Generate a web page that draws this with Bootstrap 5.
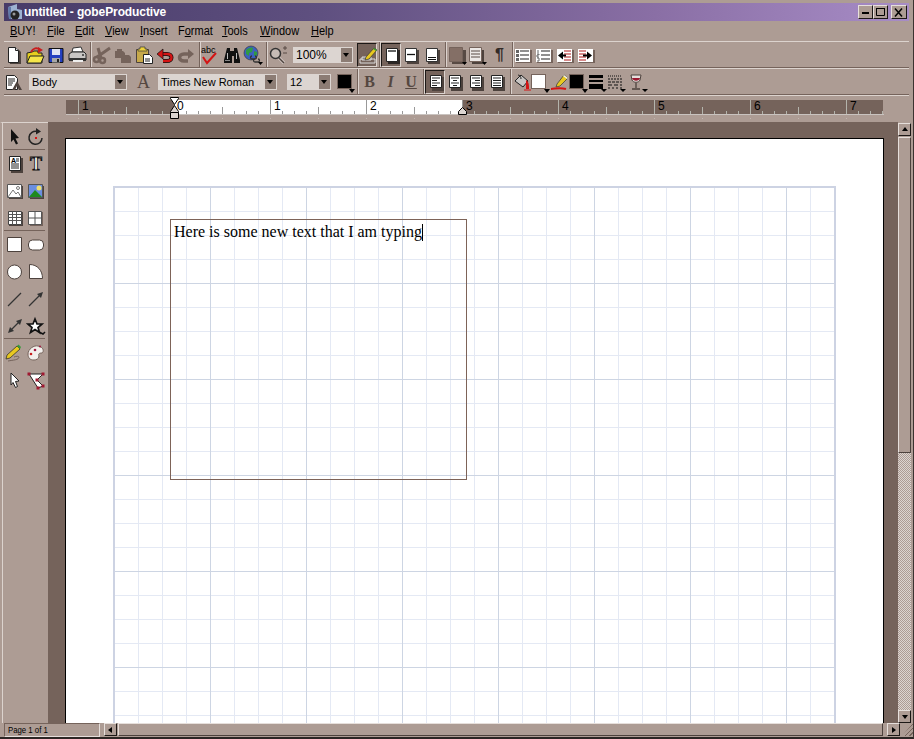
<!DOCTYPE html>
<html lang="en">
<head>
  <meta charset="UTF-8" />
  <meta name="viewport" content="width=device-width, initial-scale=1" />
  <title>untitled - gobeProductive</title>
  <link href="https://cdn.jsdelivr.net/npm/bootstrap@5.3.0/dist/css/bootstrap.min.css" rel="stylesheet" />
  <style>
    html, body { margin: 0; background: #ad9c94; overflow: hidden; }
    .app-win { width: 914px; height: 739px; background: #ad9c94; color: #000; font-family: "Liberation Sans", Arial, sans-serif; font-size: 12px; border-right: 1px solid #3b3330; border-bottom: 2px solid #2c2624; overflow: hidden; }
    .sprite { position: absolute; width: 0; height: 0; }

    .title-bar { height: 18px; margin: 3px 4px 0 4px; padding-left: 2px; background: linear-gradient(to right, #473b68 0%, #5f5080 35%, #8a6fa5 72%, #a78cc6 100%); color: #fff; font-weight: 700; font-size: 12px; letter-spacing: -.1px; }
    .win-btn { width: 15px; height: 14px; background: #ad9c94; border: 1px solid; border-color: #e6dfdb #1c1816 #1c1816 #e6dfdb; color: #000; }
    .win-close { width: 16px; margin: 0 2px 0 3px; }
    .menu-bar { height: 20px; margin-left: 4px; }
    .menu-bar .nav-link { padding: 0; color: #000; font-size: 12.5px; line-height: 20px; position: absolute; transform: scaleX(.88); transform-origin: left center; }
    .menu-wrap { position: relative; }
    .h-sep { height: 2px; margin: 0 4px 0 4px; background: linear-gradient(#75635b 50%, #dcd3ce 50%); }

    .tool-row { height: 25px; padding-left: 4px; }
    .tool-btn { width: 21px; height: 24px; padding: 0; border: 0; border-radius: 0; background: transparent; flex: none; }
    .tool-btn svg { width: 20px; height: 20px; display: block; }
    .tool-on { width: 20px; background: #75635b; border: 1px solid; border-color: #1c1816 #dcd3ce #dcd3ce #1c1816; }
    .v-sep { width: 2px; height: 25px; margin-left: 2px; flex: none; background: linear-gradient(to right, #75635b 50%, #dcd3ce 50%); }
    .w-19 { width: 19px; }
    .w-20 { width: 20px; }
    .combo-box { height: 16px; background: #dcd5d1; font-size: 11px; line-height: 16px; padding-left: 3px; position: relative; flex: none; }
    .combo-std { margin-left: 4px; }
    .combo-body { width: 98px; }
    .combo-font { width: 119px; }
    .combo-size { width: 44px; margin-left: 10px; }
    .combo-zoom { width: 60px; font-size: 12px; }
    .combo-arrow { position: absolute; right: 1px; top: 1px; width: 11px; height: 14px; background: #8c7c74; }
    .combo-arrow::after { content: ""; position: absolute; left: 2px; top: 5px; border: 3.500px solid transparent; border-top: 4px solid #000; border-bottom: 0; }
    .glyph-btn { font-family: "Liberation Serif", serif; font-size: 16px; font-weight: 700; color: #554740; line-height: 24px; text-align: center; }
    .glyph-a { margin-left: 6px; margin-right: 0; font-weight: 400; font-size: 18px; }
    .glyph-i { font-style: italic; }
    .glyph-p { font-family: "Liberation Sans", sans-serif; color: #332b28; font-size: 16px; }
    .swatch-box { height: 24px; position: relative; flex: none; width: 19px; }
    .swatch-box > span { position: absolute; left: 0; top: 4px; width: 15px; height: 15px; border: 1px solid #75635b; }
    .swatch-box::after { content: ""; position: absolute; right: 0; bottom: 1px; border: 3px solid transparent; border-top: 4px solid #000; border-bottom: 0; }
    .swatch-text { width: 18px; margin-left: 6px; }
    .swatch-white > span { background: #fff; }
    .swatch-black > span { background: #000; }

    .ruler-row { height: 26px; flex: none; }
    .ruler-row svg { display: block; }

    .side-tools { width: 48px; flex: none; border-top: 1px solid #dcd3ce; border-left: 2px solid transparent; padding-left: 2px; padding-top: 1px; box-shadow: inset 1px 0 0 #dcd3ce; }
    .side-row { height: 25px; margin-bottom: 2px; padding-left: 1px; }
    .side-row .tool-btn { height: 25px; }
    .side-sep { height: 1px; margin: -2px 3px 1px 0; background: #75635b; }

    .canvas-pane { width: 850px; flex: none; background: #75635b; padding: 16px 0 0 17px; overflow: hidden; }
    .paper { width: 819px; height: 600px; background: #fff; border: 1px solid #000; border-bottom: 0; padding: 47px 0 0 47px; }
    .grid-sheet { width: 723px; height: 560px; position: relative; border: 2px solid #cdd3e3; border-bottom: 0;
      background-image:
        linear-gradient(to right, #cdd5e3 1px, transparent 1px),
        linear-gradient(to bottom, #cdd5e3 1px, transparent 1px),
        linear-gradient(to right, #e4e9f4 1px, transparent 1px),
        linear-gradient(to bottom, #e4e9f4 1px, transparent 1px);
      background-size: 96px 96px, 96px 96px, 24px 24px, 24px 24px;
      background-position: 95px 0, 0 95px, 23px 0, 0 23px; }
    .text-frame { position: absolute; left: 55px; top: 31px; width: 297px; height: 261px; border: 1px solid #7d6358; padding: 3px 0 0 3px; font-family: "Liberation Serif", "Times New Roman", serif; font-size: 16px; line-height: 18px; white-space: nowrap; }
    .caret-bar { display: inline-block; width: 1px; height: 17px; background: #000; vertical-align: -4px; }

    .v-scroll { width: 13px; flex: none; margin-top: 1px; }
    .scroll-btn { width: 13px; height: 13px; background: #ad9c94; border: 1px solid; border-color: #e6dfdb #1c1816 #1c1816 #e6dfdb; position: relative; flex: none; }
    .tri-up::after, .tri-down::after, .tri-left::after, .tri-right::after { content: ""; position: absolute; border: 3px solid transparent; }
    .tri-up::after { left: 3px; top: 3px; border-bottom: 4px solid #000; border-top: 0; }
    .tri-down::after { left: 3px; top: 4px; border-top: 4px solid #000; border-bottom: 0; }
    .tri-left::after { left: 3px; top: 3px; border-right: 4px solid #000; border-left: 0; }
    .tri-right::after { left: 4px; top: 3px; border-left: 4px solid #000; border-right: 0; }
    .v-thumb { height: 316px; margin-top: 1px; flex: none; background: #ad9c94; border: 1px solid; border-color: #e6dfdb #4d423d #4d423d #e6dfdb; }
    .v-track { flex-grow: 1; background: repeating-conic-gradient(#ad9c94 0 25%, #dcd5d1 0 50%) 0 0 / 2px 2px; }

    .status-row { height: 14px; flex: none; }
    .page-box { width: 97px; height: 14px; margin-left: 4px; border: 1px solid; border-color: #75635b #e6dfdb #e6dfdb #75635b; font-size: 9.500px; line-height: 12px; padding-left: 3px; }
    .page-text { display: inline-block; transform: scaleX(.82); transform-origin: left center; }
    .h-thumb { width: 772px; height: 13px; margin-left: 1px; border: 1px solid; border-color: #e6dfdb #4d423d #4d423d #e6dfdb; }
    .grip-box { width: 11px; height: 13px; margin-left: 2px; background: repeating-linear-gradient(135deg, #ad9c94 0 2px, #75635b 2px 3px); clip-path: polygon(100% 0, 100% 100%, 0 100%); }
  </style>
</head>
<body>
  <svg class="sprite" aria-hidden="true">
    <symbol id="i-new" viewBox="0 0 20 20"><path d="M6 4h8l3 3v12H6z" fill="#4d423d"/><path d="M4.500 2.500h7l3 3v12h-10z" fill="#fff" stroke="#222"/><path d="M11.500 2.500v3h3" fill="#ddd" stroke="#222"/></symbol>
    <symbol id="i-open" viewBox="0 0 20 20"><path d="M2 8l5-1 2-1h4v2l4 0 0 10H2z" fill="#e6cf1e" stroke="#222"/><path d="M2 18l3-7h14l-3 7z" fill="#f5e64a" stroke="#222"/><path d="M6 7c2-4 6-5 9-2" fill="none" stroke="#c81e1e" stroke-width="2"/><path d="M13 2l5 3-5 3z" fill="#c81e1e"/></symbol>
    <symbol id="i-save" viewBox="0 0 20 20"><path d="M3 3.500h14v14H3z" fill="#2440c0" stroke="#111"/><path d="M6 4h8v6H6z" fill="#dfe3f3"/><path d="M6 13h8v4.500H6z" fill="#a8a8a8"/><path d="M11 14h2v3h-2z" fill="#222"/></symbol>
    <symbol id="i-print" viewBox="0 0 20 20"><path d="M6 3l8-1 2 5H5z" fill="#fff" stroke="#333"/><path d="M2 9l3-2h12l2 2v6H2z" fill="#c9c6c4" stroke="#222"/><path d="M2 13h17v3H2z" fill="#333"/><path d="M6 15h10v2H6z" fill="#eee"/><circle cx="16" cy="10" r="1" fill="#333"/></symbol>
    <symbol id="i-cut" viewBox="0 0 20 20"><g fill="none" stroke="#75635b"><circle cx="4.500" cy="14.500" r="2.500" stroke-width="2.500"/><circle cx="10.500" cy="15.500" r="2.500" stroke-width="2.500"/><path d="M5 12l13-9M9 13L6 3" stroke-width="3"/></g></symbol>
    <symbol id="i-copy" viewBox="0 0 20 20"><path d="M2 6h8l2 2v5H2z" fill="#75635b"/><path d="M8 10h8l2 2v6H8z" fill="#75635b"/><path d="M4 4h5v3H4z" fill="#75635b"/></symbol>
    <symbol id="i-paste" viewBox="0 0 20 20"><path d="M2.500 4.500h12v13h-12z" fill="#c7a94a" stroke="#4d423d"/><path d="M6 2h5v2h2v2H4V4h2z" fill="#eed23c" stroke="#333" stroke-width=".7"/><path d="M9.500 9.500h6l3 3v6h-9z" fill="#fff" stroke="#222"/><path d="M11 14h5M11 16h5" stroke="#222"/></symbol>
    <symbol id="i-undo" viewBox="0 0 20 20"><path d="M6 9h6c6 0 6 7 0 7H8" fill="none" stroke="#111" stroke-width="4"/><path d="M6 9h6c6 0 6 7 0 7H8" fill="none" stroke="#d41414" stroke-width="2.500"/><path d="M8 4L2 9l6 5z" fill="#d41414" stroke="#111" stroke-width=".7"/></symbol>
    <symbol id="i-redo" viewBox="0 0 20 20"><path d="M14 9H8c-6 0-6 7 0 7h4" fill="none" stroke="#75635b" stroke-width="3.500"/><path d="M12 4l6 5-6 5z" fill="#75635b"/></symbol>
    <symbol id="i-find" viewBox="0 0 20 20"><path d="M5 3h3v3h4V3h3l3 12v3h-6v-7h-2v7H2v-3z" fill="#111"/><path d="M5 8h1v6H5zM14 8h1v6h-1z" fill="#bbb"/><path d="M3 15h5v1H3z" fill="#888"/></symbol>
    <symbol id="i-web" viewBox="0 0 20 20"><circle cx="8" cy="8" r="7" fill="#3c5fc0" stroke="#333" stroke-width=".6"/><path d="M3 5c2-2 5-3 7-2l-1 4-3 1v3L3 9zM11 6l3 1v3l-3 1z" fill="#2f9a45"/><path d="M9 11c-2 0-2 3 0 3h3c2 0 2-3 0-3M12 14c-2 0-2 3 0 3h3c2 0 2-3 0-3" fill="none" stroke="#333" stroke-width="1.300"/><path d="M15 17h5l-2.500 3z"/></symbol>
    <symbol id="i-zoom" viewBox="0 0 20 20"><path d="M9 11l7 7" stroke="#dcd3ce" stroke-width="3"/><path d="M9 11l7 7" stroke="#4d423d" stroke-width="1.500"/><circle cx="7.500" cy="8.500" r="5" fill="#c6bbb5" stroke="#333" stroke-width="1.500"/><path d="M15 3h4M17 1v4M15 8h4" stroke="#584a44"/></symbol>
    <symbol id="i-edit" viewBox="0 0 20 20"><path d="M2 14h15v4H2z" fill="#75635b" stroke="#ddd"/><path d="M4 12h9v3H4z" fill="#888" stroke="#ddd"/><path d="M8 12L16 3l3 2-8 9-4 1z" fill="#e8c820" stroke="#333" stroke-width=".7"/><path d="M16 3l3 2-1 1-3-2z" fill="#3a9a3a"/></symbol>
    <symbol id="i-pgfull" viewBox="0 0 20 20"><path d="M6 5h12v14H6z" fill="#2c2624"/><path d="M4.500 3.500h11v13h-11z" fill="#fff" stroke="#222"/><path d="M6 6h8" stroke="#111" stroke-width="1.300"/></symbol>
    <symbol id="i-pghead" viewBox="0 0 20 20"><path d="M6 5h12v14H6z" fill="#4d423d"/><path d="M4.500 3.500h11v13h-11z" fill="#fff" stroke="#333"/><path d="M6 9.500h8" stroke="#111" stroke-width="1.300"/></symbol>
    <symbol id="i-pgfoot" viewBox="0 0 20 20"><path d="M6 5h12v14H6z" fill="#4d423d"/><path d="M4.500 3.500h11v13h-11z" fill="#fff" stroke="#333"/><path d="M6 12.500h8M6 14.500h8" stroke="#111" stroke-width="1.200"/></symbol>
    <symbol id="i-box" viewBox="0 0 20 20"><path d="M5 5h14v14H5z" fill="#584a44"/><path d="M2.500 2.500h13v14h-13z" fill="#846f66" stroke="#75635b"/><path d="M15 17h5l-2.500 3z"/></symbol>
    <symbol id="i-lines" viewBox="0 0 20 20"><path d="M4 5h12v14H4z" fill="#4d423d"/><path d="M1.500 2.500h12v14h-12z" fill="#ece8e6" stroke="#75635b"/><path d="M3 6h9M3 9h9M3 12h9" stroke="#584a44"/><path d="M14 17h5l-2.500 3z"/></symbol>
    <symbol id="i-bullet" viewBox="0 0 20 20"><path d="M2 5h16v13H2z" fill="#75635b"/><path d="M1 4h15v13H1z" fill="#fff"/><path d="M2 5h3v3H2zM2 9h3v3H2zM2 13h3v3H2z" fill="#666"/><path d="M6 6h9M6 10h9M6 14h9" stroke="#222" stroke-width="1.200"/></symbol>
    <symbol id="i-number" viewBox="0 0 20 20"><path d="M2 5h16v13H2z" fill="#75635b"/><path d="M1 4h15v13H1z" fill="#fff"/><path d="M3 5v3M2 9h2v1H2v2h2M2 13h2v3H2" stroke="#666" fill="none"/><path d="M6 6h9M6 10h9M6 14h9" stroke="#222" stroke-width="1.200"/></symbol>
    <symbol id="i-outdent" viewBox="0 0 20 20"><path d="M2 5h16v13H2z" fill="#75635b"/><path d="M1 4h15v13H1z" fill="#fff"/><path d="M8 6h7M8 9h7M8 12h7M8 15h7" stroke="#b01818" stroke-width="1.200"/><path d="M2 10.500l5-4v8z"/><path d="M5 9.500h5v2H5z"/></symbol>
    <symbol id="i-indent" viewBox="0 0 20 20"><path d="M2 5h16v13H2z" fill="#75635b"/><path d="M1 4h15v13H1z" fill="#fff"/><path d="M2 6h7M2 9h7M2 12h7M2 15h7" stroke="#b01818" stroke-width="1.200"/><path d="M15 10.500l-5-4v8z"/><path d="M6 9.500h5v2H6z"/></symbol>
    <symbol id="i-style" viewBox="0 0 20 20"><path d="M2.500 3.500h8l3 3v11h-11z" fill="#fff" stroke="#222"/><path d="M4 7h7M4 9h7M4 11h5M4 13h4" stroke="#222"/><path d="M8 18l5-9 5 9h-3l-2-4-2 4z" fill="#4d423d"/></symbol>
    <symbol id="i-al-left" viewBox="0 0 20 20"><path d="M6 5h12v14H6z" fill="#4d423d"/><path d="M4.500 3.500h11v12h-11z" fill="#fff" stroke="#222"/><path d="M6 6h8M6 8.500h5M6 11h8M6 13.500h5" stroke="#222"/></symbol>
    <symbol id="i-al-center" viewBox="0 0 20 20"><path d="M6 5h12v14H6z" fill="#4d423d"/><path d="M4.500 3.500h11v12h-11z" fill="#fff" stroke="#222"/><path d="M6 6h8M8 8.500h4M6 11h8M8 13.500h4" stroke="#222"/></symbol>
    <symbol id="i-al-right" viewBox="0 0 20 20"><path d="M6 5h12v14H6z" fill="#4d423d"/><path d="M4.500 3.500h11v12h-11z" fill="#fff" stroke="#222"/><path d="M6 6h8M9 8.500h5M6 11h8M9 13.500h5" stroke="#222"/></symbol>
    <symbol id="i-al-just" viewBox="0 0 20 20"><path d="M6 5h12v14H6z" fill="#4d423d"/><path d="M4.500 3.500h11v12h-11z" fill="#fff" stroke="#222"/><path d="M6 6h8M6 8.500h8M6 11h8M6 13.500h8" stroke="#222"/></symbol>
    <symbol id="i-bucket" viewBox="0 0 20 20"><path d="M3 9l6-6 7 6-5 6z" fill="#c9c6c4" stroke="#222"/><path d="M6 3c2 0 3 2 3 4" fill="none" stroke="#222"/><path d="M14 8c3 2 3 5 3 9h-3z" fill="#d41414"/><path d="M12 18h7" stroke="#d41414"/></symbol>
    <symbol id="i-pen" viewBox="0 0 20 20"><path d="M7 12l7-9 4 3-8 8-4 1z" fill="#e8c820" stroke="#333" stroke-width=".7"/><path d="M14 3l4 3-1 1-4-3z" fill="#eee"/><path d="M1 17c4 0 8-2 15 0" fill="none" stroke="#d41414" stroke-width="2"/></symbol>
    <symbol id="i-thick" viewBox="0 0 20 20"><path d="M1 3h14v3H1zM1 8h14v2H1zM1 12h14v5H1z"/><path d="M13 17h6l-3 3z"/></symbol>
    <symbol id="i-dash" viewBox="0 0 20 20"><g stroke="#111" fill="none"><path d="M1 4h14" stroke-dasharray="1 1"/><path d="M1 7h14" stroke-dasharray="2 1"/><path d="M1 10h14" stroke-dasharray="3 1"/><path d="M1 13h14" stroke-dasharray="4 2"/><path d="M1 16h14" stroke-dasharray="2 2"/></g><path d="M13 17h6l-3 3z"/></symbol>
    <symbol id="i-wine" viewBox="0 0 20 20"><path d="M3 3h10l-1 5c-1 3-7 3-8 0z" fill="#e5e0dd" stroke="#4d423d"/><path d="M4 6h8c0 3-7 4-8 0z" fill="#9a1830"/><path d="M8 11v5M4 17h8" stroke="#4d423d" stroke-width="1.300"/><path d="M14 17h6l-3 3z"/></symbol>

    <symbol id="i-pointer" viewBox="0 0 20 20"><path d="M6 2l8 9-3.500.5 2.500 5-2 1-2.500-5L6 15z" fill="#111"/></symbol>
    <symbol id="i-rotate" viewBox="0 0 20 20"><path d="M11 4.500A6.500 6.500 0 1 0 16 11" fill="none" stroke="#222" stroke-width="1.500"/><path d="M10 1l5 3.500-5 3z" fill="#222"/><path d="M9 10h2v2H9z" fill="#d41414"/></symbol>
    <symbol id="i-picline" viewBox="0 0 20 20"><path d="M4 5h14v13H4z" fill="#4d423d"/><path d="M2.500 3.500h14v13h-14z" fill="#fff" stroke="#555"/><path d="M3 16l5-7 3 4 2-2 3 5" fill="none" stroke="#777"/><circle cx="13" cy="7" r="1.500" fill="none" stroke="#777"/></symbol>
    <symbol id="i-piccolor" viewBox="0 0 20 20"><path d="M4 5h14v13H4z" fill="#4d423d"/><path d="M2.500 3.500h14v13h-14z" fill="#6a8ee0" stroke="#555"/><circle cx="13" cy="7" r="2.500" fill="#f0e070"/><path d="M3 16l6-7 7 7z" fill="#1f8a1f"/></symbol>
    <symbol id="i-tblfull" viewBox="0 0 20 20"><path d="M4 4h14v14H4z" fill="#4d423d"/><path d="M3.500 3.500h13v13h-13z" fill="#fff" stroke="#444"/><path d="M3.500 6.500h13M3.500 9.500h13M3.500 12.500h13M7.500 3.500v13M11.500 3.500v13" stroke="#555"/></symbol>
    <symbol id="i-tblplain" viewBox="0 0 20 20"><path d="M4 4h13v14H4z" fill="#75635b"/><path d="M2.500 3.500h13v13h-13z" fill="#fff" stroke="#555"/><path d="M2.500 10h13M9 3.500v13" stroke="#555"/></symbol>
    <symbol id="i-rect" viewBox="0 0 20 20"><path d="M2.500 2.500h14v14h-14z" fill="#fff" stroke="#4d423d"/></symbol>
    <symbol id="i-rrect" viewBox="0 0 20 20"><rect x="2.500" y="5" width="15" height="10" rx="4" fill="#fff" stroke="#4d423d"/></symbol>
    <symbol id="i-circle" viewBox="0 0 20 20"><circle cx="9.500" cy="10" r="7" fill="#fff" stroke="#4d423d"/></symbol>
    <symbol id="i-pie" viewBox="0 0 20 20"><path d="M3.500 2.500c8 0 13 6 13 14h-13z" fill="#fff" stroke="#4d423d"/></symbol>
    <symbol id="i-line" viewBox="0 0 20 20"><path d="M3 17L16 4" stroke="#333" stroke-width="1.300"/></symbol>
    <symbol id="i-arrow" viewBox="0 0 20 20"><path d="M3 17L14 6" stroke="#333" stroke-width="1.300"/><path d="M17 3l-6 2 4 4z" fill="#333"/></symbol>
    <symbol id="i-darrow" viewBox="0 0 20 20"><path d="M5 15L15 5" stroke="#333" stroke-width="1.300"/><path d="M17 3l-6 2 4 4zM3 17l6-2-4-4z" fill="#333"/></symbol>
    <symbol id="i-star" viewBox="0 0 20 20"><path d="M9 3l2 5h5l-4 3.500 1.500 5L9 13.500l-4.500 3 1.500-5L2 8h5z" fill="#fff" stroke="#111" stroke-width="1.700"/><path d="M13 16l4 2 2-2" stroke="#111" fill="none" stroke-width="1.500"/></symbol>
    <symbol id="i-pencil" viewBox="0 0 20 20"><path d="M2 12L12 3l3 3L5 15l-4 1z" fill="#e8c820" stroke="#222" stroke-width=".7"/><path d="M12 3l1.500-1.500L16 4l-1 2z" fill="#3a9a3a"/><path d="M3 18c5-1 11-1 11-4 0-1-3-1-5 0" fill="none" stroke="#75635b"/></symbol>
    <symbol id="i-palette" viewBox="0 0 20 20"><path d="M2 11c0-5 6-9 10-8 6 1 6 6 4 7-3 0-4 1-3 3 0 3-3 4-5 4-4 0-6-2-6-6z" fill="#f2efec" stroke="#75635b"/><circle cx="5" cy="11" r="1.300" fill="#c81e1e"/><circle cx="9" cy="7" r="1.300" fill="#a01840"/><circle cx="14" cy="3.500" r="1" fill="#a01840"/></symbol>
    <symbol id="i-select" viewBox="0 0 20 20"><path d="M6 3l8 8-3.500.5 2 5-2 1-2.500-5L6 15z" fill="#fff" stroke="#222"/></symbol>
    <symbol id="i-poly" viewBox="0 0 20 20"><path d="M3 4h14l-6 6 6 6-5 2z" fill="#fff" stroke="#222"/><path d="M1.500 2.500h3v3h-3zM15.500 2.500h3v3h-3zM9.500 8.500h3v3h-3zM15.500 14.500h3v3h-3zM10.500 16.500h3v3h-3z" fill="#a01830"/></symbol>
  </svg>

  <div class="app-win d-flex flex-column">
    <!-- title bar -->
    <div class="title-bar d-flex align-items-center flex-none">
      <svg width="18" height="17" viewBox="0 0 18 17"><path d="M2 3l9-3v5l5 1v9H3z" fill="#9db2d2"/><path d="M2 3h3v12H3z" fill="#5f78a8"/><circle cx="9" cy="11" r="4.500" fill="#222"/><circle cx="8" cy="10" r="1.500" fill="#999"/></svg>
      <span>untitled - gobeProductive</span>
      <div class="ms-auto d-flex align-items-center">
        <div class="win-btn d-flex align-items-end justify-content-center pb-1"><svg width="8" height="2"><rect width="7" height="2"/></svg></div>
        <div class="win-btn d-flex align-items-center justify-content-center"><svg width="10" height="10"><path d="M.5 1.500h8v7h-8z" fill="none" stroke="#000"/><path d="M0 1h9v1H0z"/></svg></div>
        <div class="win-btn win-close d-flex align-items-center justify-content-center"><svg width="10" height="9"><path d="M1 .5l7 8M8 .5l-7 8" stroke="#000" stroke-width="1.500"/></svg></div>
      </div>
    </div>

    <!-- menu -->
    <nav class="menu-bar nav menu-wrap">
      <a class="nav-link" style="left:6px" href="#"><u>B</u>UY!</a>
      <a class="nav-link" style="left:43px" href="#"><u>F</u>ile</a>
      <a class="nav-link" style="left:71px" href="#"><u>E</u>dit</a>
      <a class="nav-link" style="left:101px" href="#"><u>V</u>iew</a>
      <a class="nav-link" style="left:136px" href="#"><u>I</u>nsert</a>
      <a class="nav-link" style="left:174px" href="#">F<u>o</u>rmat</a>
      <a class="nav-link" style="left:218px" href="#"><u>T</u>ools</a>
      <a class="nav-link" style="left:256px" href="#"><u>W</u>indow</a>
      <a class="nav-link" style="left:307px" href="#"><u>H</u>elp</a>
    </nav>
    <div class="h-sep"></div>

    <!-- standard toolbar -->
    <div class="tool-row d-flex align-items-center">
      <button class="tool-btn"><svg><use href="#i-new"/></svg></button>
      <button class="tool-btn"><svg><use href="#i-open"/></svg></button>
      <button class="tool-btn"><svg><use href="#i-save"/></svg></button>
      <button class="tool-btn"><svg><use href="#i-print"/></svg></button>
      <div class="v-sep"></div>
      <button class="tool-btn"><svg><use href="#i-cut"/></svg></button>
      <button class="tool-btn"><svg><use href="#i-copy"/></svg></button>
      <button class="tool-btn"><svg><use href="#i-paste"/></svg></button>
      <button class="tool-btn"><svg><use href="#i-undo"/></svg></button>
      <button class="tool-btn"><svg><use href="#i-redo"/></svg></button>
      <div class="v-sep"></div>
      <button class="tool-btn"><svg viewBox="0 0 20 20"><text x="0" y="8" font-family="Liberation Sans, sans-serif" font-size="9">abc</text><path d="M2 12l4 6L15 8" fill="none" stroke="#d41414" stroke-width="2"/></svg></button>
      <button class="tool-btn"><svg><use href="#i-find"/></svg></button>
      <button class="tool-btn"><svg><use href="#i-web"/></svg></button>
      <div class="v-sep"></div>
      <button class="tool-btn"><svg><use href="#i-zoom"/></svg></button>
      <div class="combo-box combo-std combo-zoom">100%<span class="combo-arrow"></span></div>
      <button class="tool-btn tool-on ms-1"><svg><use href="#i-edit"/></svg></button>
      <div class="v-sep"></div>
      <button class="tool-btn tool-on"><svg><use href="#i-pgfull"/></svg></button>
      <button class="tool-btn"><svg><use href="#i-pghead"/></svg></button>
      <button class="tool-btn"><svg><use href="#i-pgfoot"/></svg></button>
      <div class="v-sep"></div>
      <button class="tool-btn"><svg><use href="#i-box"/></svg></button>
      <button class="tool-btn"><svg><use href="#i-lines"/></svg></button>
      <button class="tool-btn glyph-btn glyph-p">¶</button>
      <div class="v-sep"></div>
      <button class="tool-btn"><svg><use href="#i-bullet"/></svg></button>
      <button class="tool-btn"><svg><use href="#i-number"/></svg></button>
      <button class="tool-btn"><svg><use href="#i-outdent"/></svg></button>
      <button class="tool-btn"><svg><use href="#i-indent"/></svg></button>
    </div>
    <div class="h-sep"></div>

    <!-- format toolbar -->
    <div class="tool-row d-flex align-items-center">
      <button class="tool-btn"><svg><use href="#i-style"/></svg></button>
      <div class="combo-box combo-std combo-body">Body<span class="combo-arrow"></span></div>
      <button class="tool-btn glyph-btn glyph-a">A</button>
      <div class="combo-box combo-std combo-font">Times New Roman<span class="combo-arrow"></span></div>
      <div class="combo-box combo-size">12<span class="combo-arrow"></span></div>
      <div class="swatch-box swatch-black swatch-text"><span></span></div>
      <div class="v-sep"></div>
      <button class="tool-btn glyph-btn">B</button>
      <button class="tool-btn glyph-btn glyph-i">I</button>
      <button class="tool-btn w-20 glyph-btn"><u>U</u></button>
      <div class="v-sep"></div>
      <button class="tool-btn tool-on"><svg><use href="#i-al-left"/></svg></button>
      <button class="tool-btn"><svg><use href="#i-al-center"/></svg></button>
      <button class="tool-btn"><svg><use href="#i-al-right"/></svg></button>
      <button class="tool-btn"><svg><use href="#i-al-just"/></svg></button>
      <div class="v-sep"></div>
      <button class="tool-btn w-19"><svg><use href="#i-bucket"/></svg></button>
      <div class="swatch-box swatch-white"><span></span></div>
      <button class="tool-btn w-19"><svg><use href="#i-pen"/></svg></button>
      <div class="swatch-box swatch-black"><span></span></div>
      <button class="tool-btn w-19"><svg><use href="#i-thick"/></svg></button>
      <button class="tool-btn"><svg><use href="#i-dash"/></svg></button>
      <button class="tool-btn"><svg><use href="#i-wine"/></svg></button>
    </div>
    <div class="h-sep"></div>

    <!-- ruler -->
    <div class="ruler-row"><svg id="ruler" width="914" height="26"></svg></div>

    <!-- work area -->
    <div class="d-flex flex-grow-1 overflow-hidden">
      <div class="side-tools">
        <div class="side-row d-flex"><button class="tool-btn"><svg><use href="#i-pointer"/></svg></button><button class="tool-btn"><svg><use href="#i-rotate"/></svg></button></div>
        <div class="side-sep"></div>
        <div class="side-row d-flex">
          <button class="tool-btn"><svg viewBox="0 0 20 20"><path d="M6 4h12v15H6z" fill="#4d423d"/><path d="M4.500 2.500h11v14h-11z" fill="#fff" stroke="#222"/><text x="6" y="9" font-family="Liberation Sans, sans-serif" font-size="7" font-weight="700">A</text><path d="M11 5h3M11 7h3M6 10h8M6 12h8M6 14h8" stroke="#222"/></svg></button>
          <button class="tool-btn"><svg viewBox="0 0 20 20"><text x="10" y="16" text-anchor="middle" font-family="Liberation Serif, serif" font-size="18" font-weight="700" fill="#fff" stroke="#111" stroke-width=".9">T</text></svg></button>
        </div>
        <div class="side-row d-flex"><button class="tool-btn"><svg><use href="#i-picline"/></svg></button><button class="tool-btn"><svg><use href="#i-piccolor"/></svg></button></div>
        <div class="side-row d-flex"><button class="tool-btn"><svg><use href="#i-tblfull"/></svg></button><button class="tool-btn"><svg><use href="#i-tblplain"/></svg></button></div>
        <div class="side-sep"></div>
        <div class="side-row d-flex"><button class="tool-btn"><svg><use href="#i-rect"/></svg></button><button class="tool-btn"><svg><use href="#i-rrect"/></svg></button></div>
        <div class="side-row d-flex"><button class="tool-btn"><svg><use href="#i-circle"/></svg></button><button class="tool-btn"><svg><use href="#i-pie"/></svg></button></div>
        <div class="side-row d-flex"><button class="tool-btn"><svg><use href="#i-line"/></svg></button><button class="tool-btn"><svg><use href="#i-arrow"/></svg></button></div>
        <div class="side-row d-flex"><button class="tool-btn"><svg><use href="#i-darrow"/></svg></button><button class="tool-btn"><svg><use href="#i-star"/></svg></button></div>
        <div class="side-sep"></div>
        <div class="side-row d-flex"><button class="tool-btn"><svg><use href="#i-pencil"/></svg></button><button class="tool-btn"><svg><use href="#i-palette"/></svg></button></div>
        <div class="side-row d-flex"><button class="tool-btn"><svg><use href="#i-select"/></svg></button><button class="tool-btn"><svg><use href="#i-poly"/></svg></button></div>
      </div>

      <div class="canvas-pane">
        <div class="paper">
          <div class="grid-sheet">
            <div class="text-frame">Here is some new text that I am typing<span class="caret-bar"></span></div>
          </div>
        </div>
      </div>

      <div class="v-scroll d-flex flex-column">
        <div class="scroll-btn tri-up"></div>
        <div class="v-thumb"></div>
        <div class="v-track"></div>
        <div class="scroll-btn tri-down"></div>
      </div>
    </div>

    <!-- status and horizontal scroll -->
    <div class="status-row d-flex">
      <div class="page-box"><span class="page-text">Page 1 of 1</span></div>
      <div class="scroll-btn tri-left ms-1"></div>
      <div class="h-thumb"></div>
      <div class="scroll-btn tri-right ms-1"></div>
      <div class="grip-box"></div>
    </div>
  </div>

  <script>
    // ruler: one inch is 96px, zero sits at x=174
    const NS = 'http://www.w3.org/2000/svg';
    const ruler = document.getElementById('ruler');
    const Y = -97;
    function add(tag, attrs, text) {
      const el = document.createElementNS(NS, tag);
      Object.entries(attrs).forEach(([k, v]) => el.setAttribute(k, v));
      if (text !== undefined) el.textContent = text;
      ruler.appendChild(el);
      return el;
    }
    add('rect', { x: 66, y: 101 + Y, width: 817, height: 14, fill: '#75635b' });
    add('rect', { x: 175, y: 101 + Y, width: 288, height: 14, fill: '#fff' });
    add('rect', { x: 66, y: 115 + Y, width: 818, height: 1, fill: '#c9c3bf' });
    for (let x = 78; x < 883; x += 12) {
      const k = Math.round((x - 78) / 12);
      const inWhite = x >= 175 && x <= 463;
      const h = k % 8 === 0 ? 14 : k % 4 === 0 ? 7 : 3;
      add('rect', { x, y: 115 + Y - h, width: 1, height: h, fill: inWhite ? '#999' : '#b4b4ac' });
      if (k % 4 === 0) add('rect', { x, y: 119 + Y, width: 1, height: 1, fill: '#c2b6b0' });
    }
    ['1', '0', '1', '2', '3', '4', '5', '6', '7'].forEach((label, i) => {
      add('text', { x: 81 + i * 96 + (i === 1 ? 0 : 1), y: 111 + Y, 'font-family': 'Liberation Sans, sans-serif', 'font-size': 12, fill: '#000' }, label);
    });
    // indent and margin markers
    add('path', { d: `M170.500 ${98.5 + Y}h8v1l-4 6-4-6z`, fill: '#fff', stroke: '#000' });
    add('path', { d: `M174.500 ${106.5 + Y}l4 6v1h-8v-1z`, fill: '#dcd5d1', stroke: '#000' });
    add('path', { d: `M170.500 ${113.5 + Y}h8v6h-8z`, fill: '#dcd5d1', stroke: '#000' });
    add('path', { d: `M458.500 ${115.5 + Y}v-3l4-4 4 4v3z`, fill: '#dcd5d1', stroke: '#000' });
  </script>
  <script src="https://cdn.jsdelivr.net/npm/bootstrap@5.3.0/dist/js/bootstrap.bundle.min.js"></script>
</body>
</html>
